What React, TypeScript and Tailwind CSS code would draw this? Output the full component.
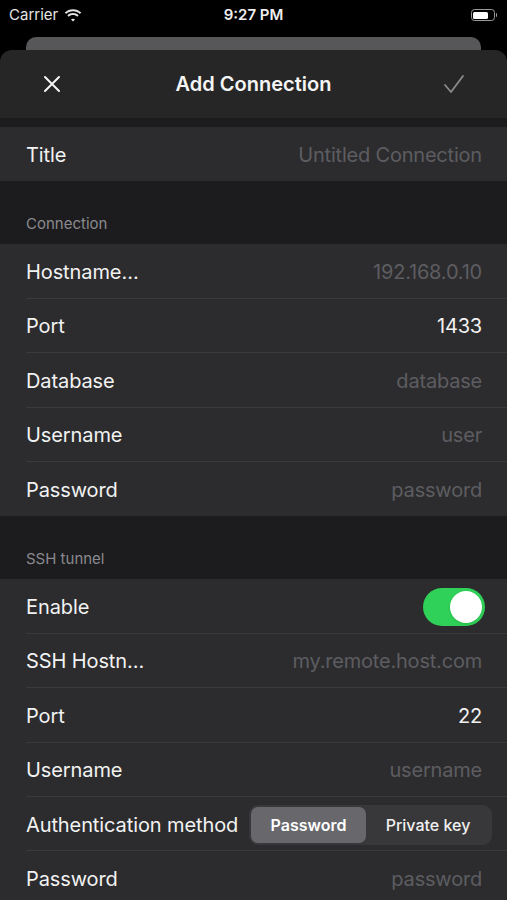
import React from "react";

const FONT = { fontFamily: "Inter, 'Liberation Sans', sans-serif" };

function Row({
  label,
  value,
  placeholder,
  last,
  children,
}: {
  label: string;
  value?: string;
  placeholder?: string;
  last?: boolean;
  children?: React.ReactNode;
}) {
  return (
    <div className="bg-[#2c2c2e] pl-[26px] h-[54.4px]">
      <div
        className={`h-full flex items-center justify-between pr-[25px] pt-[2px] ${
          last ? "" : "border-b border-[#3a3a3c]"
        }`}
      >
        <span className="text-[20px] text-[#f2f2f2] tracking-[-0.1px] whitespace-nowrap">{label}</span>
        {children ??
          (value ? (
            <span className="text-[20px] text-[#f2f2f2] tracking-[-0.2px]">{value}</span>
          ) : (
            <span className="text-[20px] text-[#5d5d61] tracking-[-0.2px]">{placeholder}</span>
          ))}
      </div>
    </div>
  );
}

function SectionHeader({ title }: { title: string }) {
  return (
    <div className="h-[63px] bg-[#1c1c1e] flex items-end pl-[26px] pb-[9px]">
      <span className="text-[15px] text-[#8a8a8e]">{title}</span>
    </div>
  );
}

export default function App() {
  return (
    <div className="w-[507px] h-[900px] bg-black overflow-hidden" style={FONT}>
      {/* status bar */}
      <div className="h-[30px] flex items-center justify-between px-[9px] text-white text-[15px]">
        <div className="flex items-center gap-[6px] w-[120px]">
          <span className="text-[#e5e5e5]">Carrier</span>
          <svg width="18" height="13" viewBox="0 0 18 13" fill="#e5e5e5">
            <path d="M9 2.2c2.7 0 5.1 1 6.9 2.7l1.3-1.4C15 1.4 12.1.2 9 .2S3 1.4.8 3.5l1.3 1.4C3.9 3.2 6.3 2.2 9 2.2z" />
            <path d="M9 6c1.7 0 3.2.6 4.3 1.7l1.3-1.4C13.2 4.9 11.2 4 9 4S4.8 4.9 3.4 6.3l1.3 1.4C5.8 6.6 7.3 6 9 6z" />
            <path d="M9 9.7c.8 0 1.5.3 2 .8L9 12.6 7 10.5c.5-.5 1.2-.8 2-.8z" />
          </svg>
        </div>
        <span className="font-semibold text-[15px] text-[#eeeeee]">9:27 PM</span>
        <div className="w-[120px] flex justify-end pr-[1px]">
          <div className="flex items-center">
            <div className="w-[24px] h-[12px] rounded-[3.5px] border border-[#9a9a9a] p-[1.5px]">
              <div className="w-[15px] h-full rounded-[1.5px] bg-white" />
            </div>
            <div className="w-[1.5px] h-[4px] bg-[#9a9a9a] rounded-r-sm ml-[1px]" />
          </div>
        </div>
      </div>

      {/* card behind */}
      <div className="mx-[26px] mt-[7px] h-[20px] rounded-t-[10px] bg-[#575759]" />

      {/* sheet */}
      <div className="-mt-[7px] rounded-t-[12px] bg-[#262627] overflow-hidden">
        <div className="h-[68px] flex items-center justify-between px-[42px] relative">
          <svg width="20" height="20" viewBox="0 0 20 20" stroke="#f5f5f5" strokeWidth="2" strokeLinecap="round">
            <path d="M3 3l14 14M17 3L3 17" />
          </svg>
          <span className="absolute left-0 right-0 text-center text-[20px] font-semibold text-[#f5f5f5] pointer-events-none">
            Add Connection
          </span>
          <svg width="22" height="20" viewBox="0 0 22 20" fill="none" stroke="#8a8a8c" strokeWidth="1.8" strokeLinecap="round" strokeLinejoin="round">
            <path d="M2 11l6 7L20 2" />
          </svg>
        </div>
        <div className="h-[9px] bg-[#1c1c1e]" />

        <Row label="Title" placeholder="Untitled Connection" last />
        <SectionHeader title="Connection" />
        <Row label="Hostname…" placeholder="192.168.0.10" />
        <Row label="Port" value="1433" />
        <Row label="Database" placeholder="database" />
        <Row label="Username" placeholder="user" />
        <Row label="Password" placeholder="password" last />
        <SectionHeader title="SSH tunnel" />
        <Row label="Enable">
          <div className="w-[62px] h-[38px] rounded-full bg-[#30d158] flex items-center justify-end pr-[3px] -mr-[3px]">
            <div className="w-[32px] h-[32px] rounded-full bg-white shadow" />
          </div>
        </Row>
        <Row label="SSH Hostn…" placeholder="my.remote.host.com" />
        <Row label="Port" value="22" />
        <Row label="Username" placeholder="username" />
        <Row label="Authentication method">
          <div className="w-[243px] h-[40px] rounded-[9px] bg-[#38383b] p-[2px] flex -mr-[10px]">
            <div className="w-[115px] h-full rounded-[7px] bg-[#68686c] flex items-center justify-center text-[16px] font-semibold text-white">
              Password
            </div>
            <div className="flex-1 flex items-center justify-center text-[16px] font-medium text-[#f0f0f0]">
              Private key
            </div>
          </div>
        </Row>
        <Row label="Password" placeholder="password" last />
      </div>
    </div>
  );
}
